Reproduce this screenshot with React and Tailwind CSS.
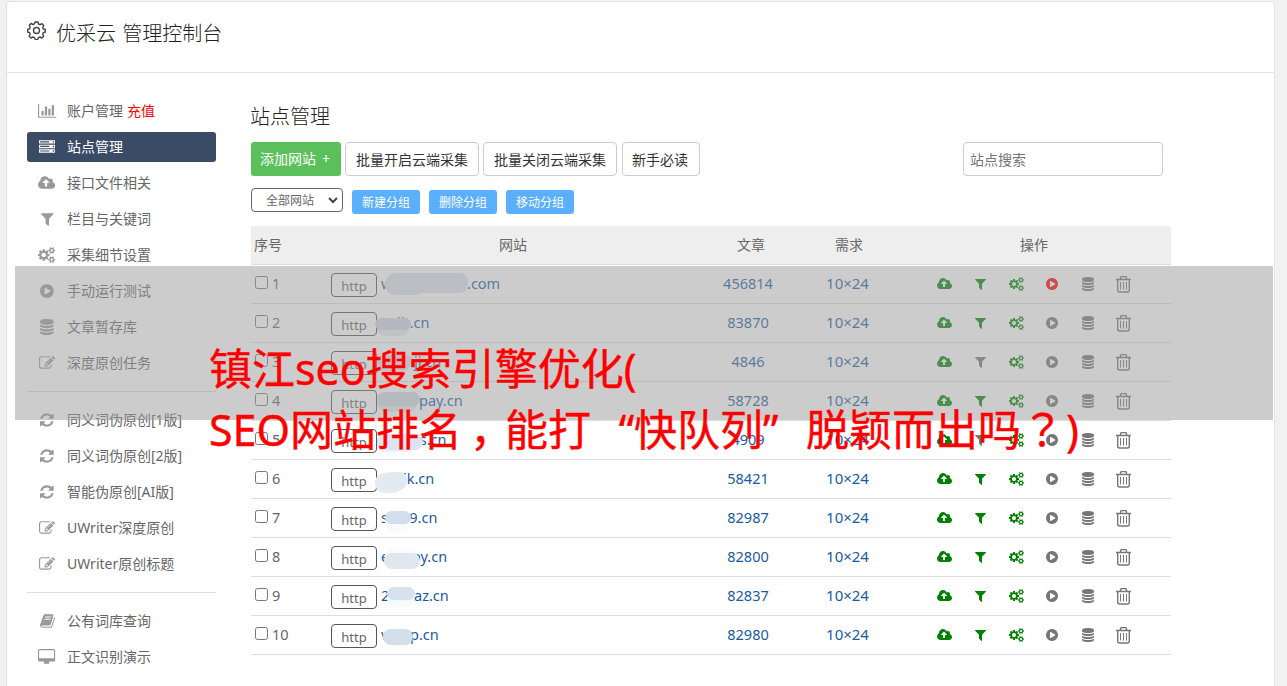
import { clsx } from "clsx";

const ICONS = {
  chart: {
    box: "0 0 2048 1792",
    w: 2048,
    d: "M640 896v512h-256v-512h256zm384-512v1024h-256v-1024h256zm1024 1152v128h-2048v-1536h128v1408h1920zm-640-896v768h-256v-768h256zm384-384v1152h-256v-1152h256z",
  },
  server: {
    box: "0 0 1792 1792",
    w: 1792,
    d: "M0 128h1792v384h-1792zM128 256v128h1024v-128zM1536 240v160h160v-160zM0 640h1792v384h-1792zM128 768v128h1024v-128zM1536 752v160h160v-160zM0 1152h1792v384h-1792zM128 1280v128h1024v-128zM1536 1264v160h160v-160z",
  },
  cloud: {
    box: "-64 0 1920 1792",
    w: 1920,
    d: "M1216 864q0-14-9-23l-352-352q-9-9-23-9t-23 9l-351 351q-10 12-10 24 0 14 9 23t23 9h224v352q0 13 9.5 22.5t22.5 9.5h192q13 0 22.5-9.5t9.5-22.5v-352h224q13 0 22.5-9.5t9.5-22.5zm640 288q0 159-112.5 271.5t-271.5 112.5h-1088q-185 0-316.5-131.5t-131.5-316.5q0-130 70-240t188-165q-2-30-2-43 0-212 150-362t362-150q156 0 285.5 87t188.5 231q71-62 166-62 106 0 181 75t75 181q0 76-41 138 130 31 213.5 135.5t83.5 238.5z",
  },
  filter: {
    box: "192 0 1408 1792",
    w: 1408,
    d: "M1595 295q17 41-14 70l-493 493v742q0 42-39 59-13 5-25 5-27 0-45-19l-256-256q-19-19-19-45v-486l-493-493q-31-29-14-70 17-39 59-39h1280q42 0 59 39z",
  },
  cogs: {
    box: "-64 0 1920 1792",
    w: 1920,
    d: "M832 896q0-106-75-181t-181-75-181 75-75 181 75 181 181 75 181-75 75-181zm768 512q0-52-38-90t-90-38-90 38-38 90q0 53 37.5 90.5t90.5 37.5 90.5-37.5 37.5-90.5zm0-1024q0-52-38-90t-90-38-90 38-38 90q0 53 37.5 90.5t90.5 37.5 90.5-37.5 37.5-90.5zm-384 421v185q0 10-7 19.5t-16 10.5l-155 24q-11 35-32 76 34 48 90 115 7 11 7 20 0 12-7 19-23 30-82.5 89.5t-78.5 59.5q-11 0-21-7l-115-90q-37 19-77 31-11 108-23 155-7 24-30 24h-186q-11 0-20-7.5t-10-17.5l-23-153q-34-10-75-31l-118 89q-7 7-20 7-11 0-21-8-144-133-144-160 0-9 7-19 10-14 41-53t47-61q-23-44-35-82l-152-24q-10-1-17-9.5t-7-19.5v-185q0-10 7-19.5t16-10.5l155-24q11-35 32-76-34-48-90-115-7-11-7-20 0-12 7-20 22-30 82-89t79-59q11 0 21 7l115 90q34-18 77-32 11-108 23-154 7-24 30-24h186q11 0 20 7.5t10 17.5l23 153q34 10 75 31l118-89q8-7 20-7 11 0 21 8 144 133 144 160 0 8-7 19-12 16-42 54t-45 60q23 48 34 82l152 23q10 2 17 10.5t7 19.5zm640 533v140q0 16-149 31-12 27-30 52 51 113 51 138 0 4-4 7-122 71-124 71-8 0-46-47t-52-68q-20 2-30 2t-30-2q-14 21-52 68t-46 47q-2 0-124-71-4-3-4-7 0-25 51-138-18-25-30-52-149-15-149-31v-140q0-16 149-31 13-29 30-52-51-113-51-138 0-4 4-7 4-2 35-20t59-34 30-16q8 0 46 46.5t52 67.5q20-2 30-2t30 2q51-71 92-112l6-2q4 0 124 70 4 3 4 7 0 25-51 138 17 23 30 52 149 15 149 31zm0-1024v140q0 16-149 31-12 27-30 52 51 113 51 138 0 4-4 7-122 71-124 71-8 0-46-47t-52-68q-20 2-30 2t-30-2q-14 21-52 68t-46 47q-2 0-124-71-4-3-4-7 0-25 51-138-18-25-30-52-149-15-149-31v-140q0-16 149-31 13-29 30-52-51-113-51-138 0-4 4-7 4-2 35-20t59-34 30-16q8 0 46 46.5t52 67.5q20-2 30-2t30 2q51-71 92-112l6-2q4 0 124 70 4 3 4 7 0 25-51 138 17 23 30 52 149 15 149 31z",
  },
  play: {
    box: "128 0 1536 1792",
    w: 1536,
    d: "M896 128q209 0 385.5 103t279.5 279.5 103 385.5-103 385.5-279.5 279.5-385.5 103-385.5-103-279.5-279.5-103-385.5 103-385.5 279.5-279.5 385.5-103zm384 823q32-18 32-55t-32-55l-544-320q-31-19-64-1-32 19-32 56v640q0 37 32 56 16 8 32 8 17 0 32-9z",
  },
  database: {
    box: "128 0 1536 1792",
    w: 1536,
    d: "M896 768q237 0 443-43t325-127v170q0 69-103 128t-280 93.5-385 34.5-385-34.5-280-93.5-103-128v-170q119 84 325 127t443 43zm0 768q237 0 443-43t325-127v170q0 69-103 128t-280 93.5-385 34.5-385-34.5-280-93.5-103-128v-170q119 84 325 127t443 43zm0-384q237 0 443-43t325-127v170q0 69-103 128t-280 93.5-385 34.5-385-34.5-280-93.5-103-128v-170q119 84 325 127t443 43zm0-1152q208 0 385 34.5t280 93.5 103 128v128q0 69-103 128t-280 93.5-385 34.5-385-34.5-280-93.5-103-128v-128q0-69 103-128t280-93.5 385-34.5z",
  },
  edit: {
    box: "0 0 1792 1792",
    w: 1792,
    d: "M888 1184l116-116-152-152-116 116v56h96v96h56zm440-720q-16-16-33 1l-350 350q-17 17-1 33t33-1l350-350q17-17 1-33zm80 594v190q0 119-84.5 203.5t-203.5 84.5h-832q-119 0-203.5-84.5t-84.5-203.5v-832q0-119 84.5-203.5t203.5-84.5h832q63 0 117 25 15 7 18 23 3 17-9 29l-49 49q-14 14-32 8-23-6-45-6h-832q-66 0-113 47t-47 113v832q0 66 47 113t113 47h832q66 0 113-47t47-113v-126q0-13 9-22l64-64q15-15 35-7t20 29zm-96-738l288 288-672 672h-288v-288zm444 132l-92 92-288-288 92-92q28-28 68-28t68 28l152 152q28 28 28 68t-28 68z",
  },
  refresh: {
    box: "128 0 1536 1792",
    w: 1536,
    d: "M1639 1056q0 5-1 7-64 268-268 434.5t-478 166.5q-146 0-282.5-55t-243.5-157l-129 129q-19 19-45 19t-45-19-19-45v-448q0-26 19-45t45-19h448q26 0 45 19t19 45-19 45l-137 137q71 66 161 102t187 36q134 0 250-65t186-179q11-17 53-117 8-23 30-23h192q13 0 22.5 9.5t9.5 22.5zm25-800v448q0 26-19 45t-45 19h-448q-26 0-45-19t-19-45 19-45l138-138q-148-137-349-137-134 0-250 65t-186 179q-11 17-53 117-8 23-30 23h-199q-13 0-22.5-9.5t-9.5-22.5v-7q65-268 270-434.5t480-166.5q146 0 284 55.5t245 156.5l130-129q19-19 45-19t45 19 19 45z",
  },
  book: {
    box: "64 0 1664 1792",
    w: 1664,
    d: "M1703 478q40 57 18 129l-275 906q-19 64-76.5 107.5t-122.5 43.5h-923q-77 0-148.5-53.5t-99.5-131.5q-24-67-2-127 0-4 3-27t4-37q1-8-3-21.5t-3-19.5q2-11 8-21t16.5-23.5 16.5-23.5q23-38 45-91.5t30-91.5q3-10 .5-30t-.5-28q3-11 17-28t17-23q21-36 42-92t25-90q1-9-2.5-32t.5-28q4-13 22-30.5t22-22.5q19-26 42.5-84.5t27.5-96.5q1-8-3-25.5t-2-26.5q2-8 9-18t18-23 17-21q8-12 16.5-30.5t15-35 16-36 19.5-32 26.5-23.5 36-11.5 47.5 5.5l-1 3q38-9 51-9h761q74 0 114 56t18 130l-274 906q-36 119-71.5 153.5t-128.5 34.5h-869q-27 0-38 15-11 16-1 43 24 70 144 70h923q29 0 56-15.5t35-41.5l300-987q7-22 5-57 38 15 59 43zm-1064 2q-4 13 2 22.5t20 9.5h608q13 0 25.5-9.5t16.5-22.5l21-64q4-13-2-22.5t-20-9.5h-608q-13 0-25.5 9.5t-16.5 22.5zm-83 256q-4 13 2 22.5t20 9.5h608q13 0 25.5-9.5t16.5-22.5l21-64q4-13-2-22.5t-20-9.5h-608q-13 0-25.5 9.5t-16.5 22.5z",
  },
  desktop: {
    box: "-64 0 1920 1792",
    w: 1920,
    d: "M1728 992v-832q0-13-9.5-22.5t-22.5-9.5h-1600q-13 0-22.5 9.5t-9.5 22.5v832q0 13 9.5 22.5t22.5 9.5h1600q13 0 22.5-9.5t9.5-22.5zm128-832v1088q0 66-47 113t-113 47h-544q0 37 16 77.5t32 71 16 43.5q0 26-19 45t-45 19h-512q-26 0-45-19t-19-45q0-14 16-44t32-70 16-78h-544q-66 0-113-47t-47-113v-1088q0-66 47-113t113-47h1600q66 0 113 47t47 113z",
  },
};

const menu = [
  [
    { icon: "chart", label: "账户管理", extra: "充值" },
    { icon: "server", label: "站点管理", active: true },
    { icon: "cloud", label: "接口文件相关" },
    { icon: "filter", label: "栏目与关键词" },
    { icon: "cogs", label: "采集细节设置" },
    { icon: "play", label: "手动运行测试" },
    { icon: "database", label: "文章暂存库" },
    { icon: "edit", label: "深度原创任务" },
  ],
  [
    { icon: "refresh", label: "同义词伪原创[1版]" },
    { icon: "refresh", label: "同义词伪原创[2版]" },
    { icon: "refresh", label: "智能伪原创[AI版]" },
    { icon: "edit", label: "UWriter深度原创" },
    { icon: "edit", label: "UWriter原创标题" },
  ],
  [
    { icon: "book", label: "公有词库查询" },
    { icon: "desktop", label: "正文识别演示" },
  ],
];

// head / tail are the readable parts of the domain, soft + mask cover the rest
const sites = [
  { id: 1, head: "w", tail: ".com", tailAt: "ml-[86px]", soft: "left-[4px] top-[-8px] w-[40px] h-5 bg-[#dde3ea]", mask: "left-[6px] top-[-10px] w-[81px] h-5 bg-[#dde3ea]", count: 456814, running: true },
  { id: 2, head: "", tail: "llt.cn", tailAt: "ml-[16px]", soft: "-left-1 top-[-3px] w-8 h-[17px] bg-[#e6eaee]", mask: "left-[-6px] top-[-4px] w-9 h-3 bg-[#d0d9e4]", count: 83870 },
  { id: 3, head: "", tail: "ji.cn", tailAt: "ml-[33px]", soft: "-left-1 top-[-3px] w-8 h-[15px] bg-[#e6eaee]", mask: "-left-1 top-[-6px] w-9 h-3 bg-[#dfe5ee]", count: 4846, noFilter: true },
  { id: 4, head: "", tail: "pay.cn", tailAt: "ml-[38px]", soft: "-left-1 top-[-6px] w-10 h-[18px] bg-[#e2e8ed]", mask: "-left-1 top-[-8px] w-[43px] h-[14px] bg-[#d0dae2]", count: 58728 },
  { id: 5, head: "", tail: "'s.cn", tailAt: "ml-[36px]", soft: "-left-1 top-[-3px] w-10 h-[16px] bg-[#eef2f7]", mask: "-left-1 top-[-5px] w-[46px] h-[16px] bg-[#dbe4ef]", count: 4909, noFilter: true },
  { id: 6, head: "", tail: "ik.cn", tailAt: "ml-[22px]", soft: "left-[-6px] top-[-5px] w-[28px] h-[20px] bg-[#e6ebf1]", mask: "left-[2px] top-[-6px] w-[24px] h-[18px] bg-[#e2e9f1]", count: 58421 },
  { id: 7, head: "sf", tail: "39.cn", tailAt: "ml-[20px]", soft: "left-[4px] top-[-2px] w-6 h-[18px] bg-[#f8fafc]", mask: "left-[4px] top-[-6px] w-[26px] h-[13px] bg-[#d1deeb]", count: 82987 },
  { id: 8, head: "e", tail: "oy.cn", tailAt: "ml-[31px]", soft: "left-[4px] top-[-7px] w-8 h-[12px] bg-[#f8fafc]", mask: "left-[3px] top-[-3px] w-9 h-[16px] bg-[#e0e7ef]", count: 82800 },
  { id: 9, head: "2", tail: "az.cn", tailAt: "ml-[33px]", soft: "left-[6px] top-[-4px] w-[26px] h-[16px] bg-[#f6f9fb]", mask: "left-[6px] top-[-8px] w-[28px] h-[13px] bg-[#d6e2ed]", count: 82837 },
  { id: 10, head: "v", tail: "p.cn", tailAt: "ml-[29px]", soft: "left-[10px] top-[-3px] w-5 h-[17px] bg-[#f8fafc]", mask: "left-[2px] top-[-5px] w-[30px] h-[16px] bg-[#d3dfeb]", count: 82980 },
];

function Icon({ name, size = 16, className }) {
  const icon = ICONS[name];
  return (
    <svg
      viewBox={icon.box}
      width={(icon.w / 1792) * size}
      height={size}
      fill="currentColor"
      fillRule="evenodd"
      className={clsx("shrink-0 overflow-visible", className)}
    >
      <path d={icon.d} />
    </svg>
  );
}

function Trash() {
  return (
    <svg width="15" height="17" viewBox="0 0 15 17" fill="none" stroke="currentColor" className="shrink-0">
      <path
        d="M0 3.5h15M4.5 3.5v-1.5q0-1.5 1.5-1.5h3q1.5 0 1.5 1.5v1.5M1.7 3.5v10.5q0 2 2 2h7.6q2 0 2-2v-10.5"
        strokeWidth="1.4"
      />
      <path d="M4.5 6v7.5M7.5 6v7.5M10.5 6v7.5" />
    </svg>
  );
}

function Gear() {
  return (
    <svg width="19" height="19" viewBox="0 0 19 19" fill="none" stroke="#444" strokeWidth="1.4" strokeLinejoin="round">
      <path d="M8 1h3l.5 2 1.5.7 2-1 1.7 1.8-1 2 .6 1.5 2 .5v2.5l-2 .7-.6 1.5 1 2-1.8 1.800-2-1-1.500.600-.700 2h-2.500l-.700-2-1.500-.600-2 1-1.800-1.800 1-2-.600-1.500-2-.700v-2.500l2-.700.600-1.500-1-2 1.800-1.800 2 1 1.500-.600z" />
      <circle cx="9.5" cy="9.5" r="3" />
    </svg>
  );
}

function Sidebar() {
  return (
    <aside className="w-[189px] shrink-0 pt-[23px]">
      {menu.map((group, index) => (
        <ul
          key={index}
          className={clsx("flex flex-col gap-1.5", index > 0 && "mt-[13px] border-t border-[#dcdcdc] pt-[13px]")}
        >
          {group.map((item) => (
            <li
              key={item.label}
              className={clsx(
                "flex h-[30px] items-center rounded-[3px]",
                item.active ? "bg-[#3a4b66] text-white" : "text-[#666]"
              )}
            >
              <span className={clsx("flex w-10 justify-center", item.active ? "text-white" : "text-[#999]")}>
                <Icon name={item.icon} />
              </span>
              <span className="whitespace-nowrap">
                {item.label}
                {item.extra && <span className="ml-1 text-[#f00]">{item.extra}</span>}
              </span>
            </li>
          ))}
        </ul>
      ))}
    </aside>
  );
}

function SiteRow({ site }) {
  return (
    <div className="flex h-[39px] items-center border-b border-[#ddd] text-[#666]">
      <div className="flex w-20 items-center pl-1">
        <input
          type="checkbox"
          className="mr-1 mb-0.5 h-[13px] w-[13px] appearance-none rounded-[2.5px] border border-[#767676] bg-white"
        />
        <span className="mb-0.5 text-[14.5px]">{site.id}</span>
      </div>
      <div className="flex w-[371px] items-center">
        <span className="mt-0.5 flex h-6 w-[46px] items-center justify-center rounded border border-[#555] pt-0.5 text-[13px]">
          http
        </span>
        <div className="relative mb-0.5 ml-1 flex h-5 items-center text-[14.5px] text-[#1a5a9e]">
          <span className="w-0 whitespace-nowrap">{site.head}</span>
          <span className={clsx("whitespace-nowrap", site.tailAt)}>{site.tail}</span>
          <div className="absolute top-1/2 left-0">
            <div className={clsx("absolute rounded-[9px]", site.soft)} />
            <div className={clsx("absolute rounded-[8px]", site.mask)} />
          </div>
        </div>
      </div>
      <div className="mb-0.5 w-[92px] text-center text-[14.5px] text-[#1a5a9e]">{site.count}</div>
      <div className="w-[107px] text-center text-[15px] text-[#1a5a9e]">10×24</div>
      <div className="flex items-center pl-[25px] text-[#777]">
        <span className="flex w-9 justify-center text-[#008000]">
          <Icon name="cloud" size={14} />
        </span>
        <span className={clsx("flex w-9 justify-center", !site.noFilter && "text-[#008000]")}>
          <Icon name="filter" size={14} />
        </span>
        <span className="flex w-9 justify-center text-[#008000]">
          <Icon name="cogs" size={14} />
        </span>
        <span className={clsx("flex w-9 justify-center", site.running && "text-[#f00]")}>
          <Icon name="play" size={14} />
        </span>
        <span className="flex w-9 justify-center">
          <Icon name="database" size={14} />
        </span>
        <span className="flex w-[35px] justify-center">
          <Trash />
        </span>
      </div>
    </div>
  );
}

function Content() {
  return (
    <main className="ml-[35px] w-[920px] pt-[31px]">
      <h2 className="-ml-px text-[20px] leading-[26px] font-light text-[#222]">站点管理</h2>
      <div className="mt-3 flex items-center text-[#333]">
        <button className="h-[34px] w-[90px] rounded-[3px] bg-[#5bc05b] pr-0.5 text-white">
          添加网站<span className="ml-1.5">+</span>
        </button>
        <button className="ml-1 h-[34px] w-[134px] rounded-[4px] border border-[#ccc] pt-0.5">批量开启云端采集</button>
        <button className="ml-1 h-[34px] w-[134px] rounded-[4px] border border-[#ccc] pt-0.5">批量关闭云端采集</button>
        <button className="ml-[5px] h-[34px] w-[78px] rounded-[4px] border border-[#ccc] pt-0.5 pr-0.5">新手必读</button>
        <input
          placeholder="站点搜索"
          className="mr-2 ml-auto h-[34px] w-[200px] rounded-[4px] border border-[#ccc] px-1.5 placeholder:text-[#757575]"
        />
      </div>
      <div className="mt-3 flex h-[26px] gap-[9px] text-xs">
        <div className="flex h-6 w-[92px] items-center rounded-[4px] border border-[#666] pl-[14px] text-[#666]">
          <span className="pt-0.5">全部网站</span>
          <svg width="10" height="7" viewBox="0 0 10 7" fill="none" stroke="#444" strokeWidth="2" className="ml-[14px]">
            <path d="M1 1l4 4 4-4" />
          </svg>
        </div>
        <button className="mt-0.5 h-6 w-[68px] rounded-[3px] bg-[#5aafff] pt-0.5 text-white">新建分组</button>
        <button className="mt-0.5 h-6 w-[68px] rounded-[3px] bg-[#5aafff] pt-0.5 text-white">删除分组</button>
        <button className="mt-0.5 h-6 w-[68px] rounded-[3px] bg-[#5aafff] pt-0.5 text-white">移动分组</button>
      </div>
      <div className="mt-3 flex h-[39px] items-center border-b border-[#ddd] bg-[#eee] text-[#666]">
        <div className="w-20 pl-[3px]">序号</div>
        <div className="w-[364px] text-center">网站</div>
        <div className="w-[108px] pl-1 text-center">文章</div>
        <div className="w-[90px] pl-0.5 text-center">需求</div>
        <div className="w-[278px] pl-1 text-center">操作</div>
      </div>
      {sites.map((site) => (
        <SiteRow key={site.id} site={site} />
      ))}
    </main>
  );
}

export default function App() {
  return (
    <div className="relative h-[686px] w-[1287px] overflow-hidden bg-[#f1f1f1] font-['Noto_Sans','Noto_Sans_CJK_SC',sans-serif] text-sm">
      <div className="mt-px ml-1.5 h-[700px] w-[1269px] rounded-t-[4px] border border-[#e3e3e3] bg-white">
        <header className="flex h-[71px] items-start border-b border-[#e5e5e5] pt-[19px] pl-5">
          <Gear />
          <h1 className="ml-[10px] text-[20px] leading-[26px] font-light [word-spacing:1px] text-[#222]">
            优采云 管理控制台
          </h1>
        </header>
        <div className="flex pl-5">
          <Sidebar />
          <Content />
        </div>
      </div>
      {/* title banner over the page */}
      <div className="absolute top-[266px] left-[15px] h-[154px] w-[1258px] bg-[#999]/50" />
      <div className="absolute top-[339px] left-[209px] text-[43px] leading-[60px] whitespace-nowrap text-[#f00] [-webkit-text-stroke:0.4px_#f00]">
        <p>镇江seo搜索引擎优化(</p>
        <p className="-mt-0.5">
          SEO网站排名<span className="relative left-2">，</span>能打
          <span className="inline-block w-[43px] text-right leading-none">“</span>快队列
          <span className="inline-block w-[43px] leading-none">”</span>脱颖而出吗
          <span className="font-['Noto_Sans_CJK_TC',sans-serif]">？</span>
          <span className="ml-0.5">)</span>
        </p>
      </div>
    </div>
  );
}
